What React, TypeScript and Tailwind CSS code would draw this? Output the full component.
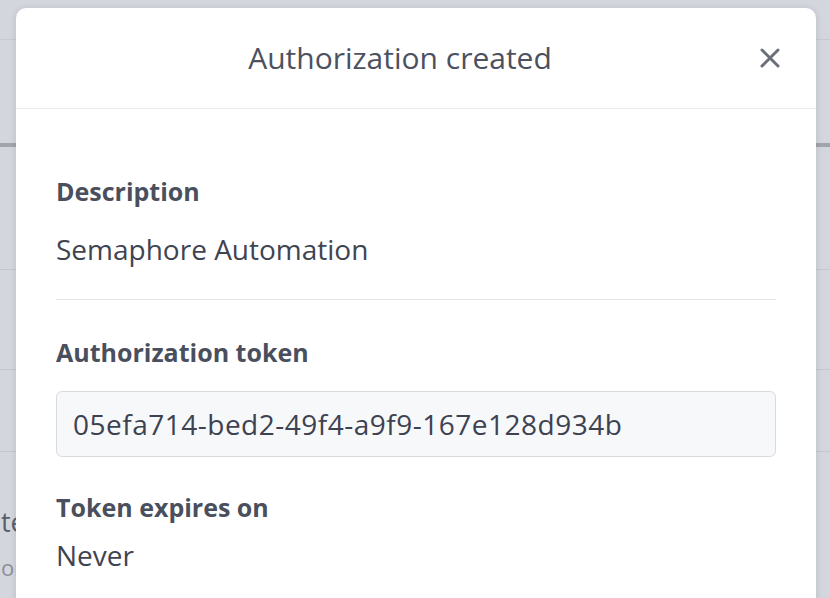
export default function App() {
  return (
    <div
      className="relative h-[598px] w-full overflow-hidden bg-[#d3d6dd]"
      style={{ fontFamily: '"Open Sans", "Noto Sans", sans-serif' }}
    >
      {/* dimmed page behind the dialog */}
      <div className="h-[40px] border-b border-[#c7cad1]" />
      <div className="h-[103px]" />
      <div className="h-[4px] bg-[#a1a4aa]" />
      <div className="h-[123px] border-b border-[#c4c7ce]" />
      <div className="h-[100px] border-b border-[#c4c7ce]" />
      <div className="h-[82px] border-b border-[#c4c7ce]" />
      <div className="pl-px pt-[52px]">
        <p className="text-[27px] leading-[36px] text-[#5a5e6b]">te</p>
        <p className="mt-[12px] text-[22px] leading-[30px] text-[#8b8f9a]">on</p>
      </div>

      {/* dialog */}
      <div className="absolute left-[16px] top-[8px] bottom-[-24px] w-[800px] rounded-[10px] bg-white shadow-[0_1px_6px_rgba(40,44,56,0.15)]">
        <div className="flex h-[101px] items-center border-b border-[#e9eaed] px-[30px]">
          <h2 className="flex-1 text-center text-[30px] font-normal leading-[36px] text-[#4c5160]">
            Authorization created
          </h2>
          <button className="flex h-[32px] w-[32px] items-center justify-center text-[#6b6f79]">
            <svg width="20" height="20" viewBox="0 0 20 20" fill="none" stroke="currentColor" strokeWidth="3" strokeLinecap="round">
              <path d="M2 2L18 18M18 2L2 18" />
            </svg>
          </button>
        </div>

        <div className="px-10 pt-[66px]">
          <div className="text-[25px] font-bold leading-[32px] text-[#4a4f5d]">Description</div>
          <div className="mt-[24px] text-[28px] leading-[36px] text-[#3f4451]">Semaphore Automation</div>
          <div className="mt-[32px] border-t border-[#e3e4e8]" />

          <div className="mt-[36px] text-[25px] font-bold leading-[32px] text-[#4a4f5d]">Authorization token</div>
          <div className="mt-[23px] flex h-[66px] items-center rounded-[6px] border-[1.5px] border-[#d8dadf] bg-[#f7f8fa] px-4 text-[28px] tracking-[0.5px] text-[#3d4250]">
            05efa714-bed2-49f4-a9f9-167e128d934b
          </div>

          <div className="mt-[34px] text-[25px] font-bold leading-[32px] text-[#4a4f5d]">Token expires on</div>
          <div className="mt-[14px] text-[28px] leading-[36px] text-[#3f4451]">Never</div>
        </div>
      </div>
    </div>
  );
}
